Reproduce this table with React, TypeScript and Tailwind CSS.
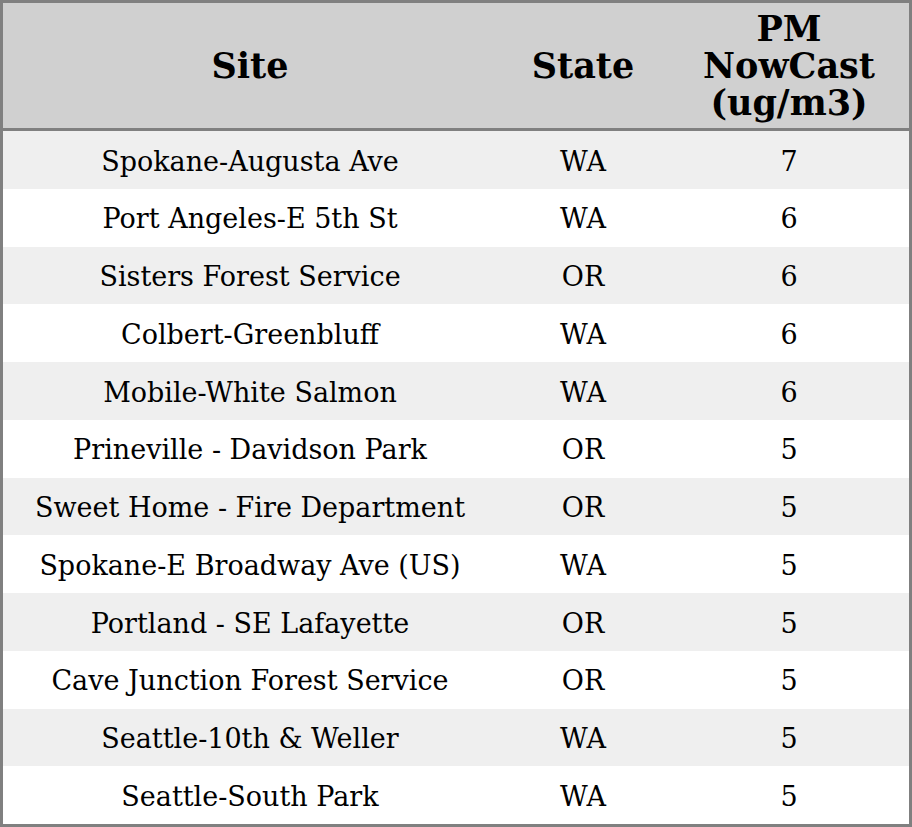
const rows: [string, string, number][] = [
  ['Spokane-Augusta Ave', 'WA', 7],
  ['Port Angeles-E 5th St', 'WA', 6],
  ['Sisters Forest Service', 'OR', 6],
  ['Colbert-Greenbluff', 'WA', 6],
  ['Mobile-White Salmon', 'WA', 6],
  ['Prineville - Davidson Park', 'OR', 5],
  ['Sweet Home - Fire Department', 'OR', 5],
  ['Spokane-E Broadway Ave (US)', 'WA', 5],
  ['Portland - SE Lafayette', 'OR', 5],
  ['Cave Junction Forest Service', 'OR', 5],
  ['Seattle-10th & Weller', 'WA', 5],
  ['Seattle-South Park', 'WA', 5],
]

const App = () => {
  return (
    <div className="w-[912px] h-[827px] border-[3px] border-[#808080] bg-white flex flex-col font-['DejaVu_Serif',serif] text-black">
      <div className="h-[125px] shrink-0 bg-[#d0d0d0] border-b-[3px] border-[#808080] box-content grid grid-cols-[494px_172px_1fr] items-center text-center font-bold text-[35px] leading-[37px]">
        <div>Site</div>
        <div>State</div>
        <div>PM<br />NowCast<br />(ug/m3)</div>
      </div>
      <div className="flex-1 grid grid-rows-12">
        {rows.map(([site, state, pm], i) => (
          <div
            key={site}
            className={`grid grid-cols-[494px_172px_1fr] items-center text-center text-[27px] pt-[4px] ${i % 2 === 0 ? 'bg-[#efefef]' : 'bg-white'}`}
          >
            <div>{site}</div>
            <div>{state}</div>
            <div>{pm}</div>
          </div>
        ))}
      </div>
    </div>
  )
}

export default App
